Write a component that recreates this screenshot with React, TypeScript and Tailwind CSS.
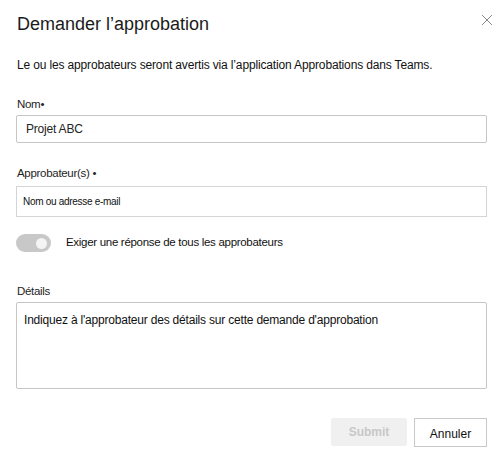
export default function App() {
  const font = { fontFamily: '"Segoe UI", "Liberation Sans", Arial, sans-serif' };
  return (
    <div className="w-[500px] h-[455px] bg-white text-[#252423] relative" style={font}>
      <div className="pl-[17px] pr-[13px] pt-[11px]">
        <div className="flex items-start justify-between">
          <h1 className="text-[18px] leading-[26px] text-[#1b1b1b]">Demander l’approbation</h1>
          <button aria-label="Fermer" className="mt-[3px] mr-[-6px] text-[#8a8886]">
            <svg width="12" height="12" viewBox="0 0 12 12" fill="none" stroke="currentColor" strokeWidth="1">
              <path d="M1 1L11 11M11 1L1 11" />
            </svg>
          </button>
        </div>
        <p className="mt-[20px] text-[12px] leading-[16px] tracking-[-0.15px] text-[#111]">
          Le ou les approbateurs seront avertis via l’application Approbations dans Teams.
        </p>

        <label className="block mt-[23px] text-[11.5px] leading-[16px] tracking-[-0.3px]">Nom•</label>
        <div className="mt-[3px] ml-[-1px] h-[28px] border border-[#c6c6c6] rounded-[2px] flex items-center px-[9px] text-[12px] tracking-[-0.2px]">
          Projet ABC
        </div>

        <label className="block mt-[22px] text-[11.5px] leading-[16px] tracking-[-0.3px]">Approbateur(s) •</label>
        <div className="mt-[5px] ml-[-1px] h-[31px] border border-[#d4d4d4] flex items-center px-[6px] text-[10px] tracking-[-0.3px] text-[#111]">
          Nom ou adresse e-mail
        </div>

        <div className="mt-[17px] flex items-center">
          <div className="ml-[-1px] w-[35px] h-[18px] rounded-full bg-[#c8c8c8] flex items-center justify-end pr-[4px]">
            <div className="w-[11px] h-[11px] rounded-full bg-[#f4f4f4]" />
          </div>
          <span className="ml-[15px] text-[11.5px] tracking-[-0.3px] text-[#111]">Exiger une réponse de tous les approbateurs</span>
        </div>

        <label className="block mt-[31px] text-[11.5px] leading-[16px] tracking-[-0.3px]">Détails</label>
        <div className="mt-[3px] ml-[-1px] h-[87px] border border-[#c6c6c6] rounded-[2px] px-[7px] pt-[8px] text-[12px] tracking-[-0.2px] text-[#111]">
          Indiquez à l'approbateur des détails sur cette demande d'approbation
        </div>

        <div className="mt-[29px] flex justify-end gap-[7px]">
          <button className="w-[76px] h-[28px] bg-[#f0f0f0] text-[#c8c8c8] text-[12px] font-bold rounded-[2px]">Submit</button>
          <button className="w-[73px] h-[29px] bg-white border border-[#c8c8c8] text-[12px] pt-[3px] text-[#111]">Annuler</button>
        </div>
      </div>
    </div>
  );
}
